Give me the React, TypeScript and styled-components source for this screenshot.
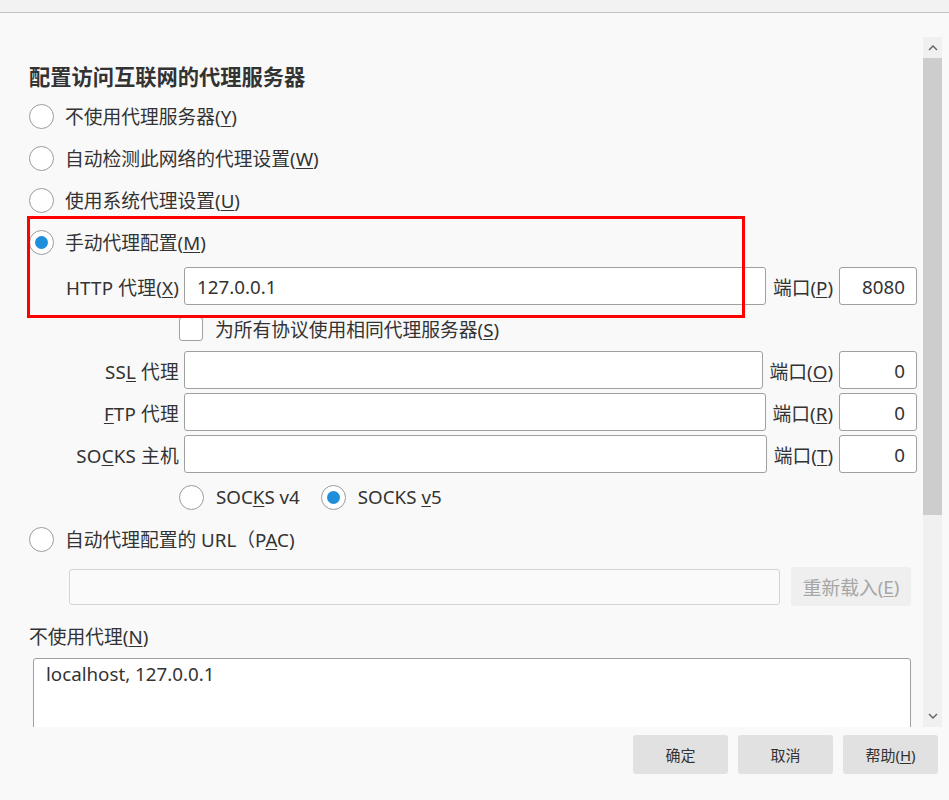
import styled, { createGlobalStyle } from 'styled-components';

const GlobalStyle = createGlobalStyle`
  html, body {
    margin: 0;
    padding: 0;
    background: #f9f9f9;
  }
  body {
    font-family: "Noto Sans", "Noto Sans CJK SC", sans-serif;
    font-size: 18.75px;
    color: #333;
  }
  * {
    box-sizing: border-box;
  }
`;

const Window = styled.div`
  width: 949px;
  height: 800px;
  display: flex;
  flex-direction: column;
  background: #f9f9f9;
  overflow: hidden;
`;

const TopBar = styled.div`
  height: 13px;
  flex-shrink: 0;
  background: #f2f2f2;
  border-bottom: 1px solid #c4c4c4;
`;

const Body = styled.div`
  display: flex;
  height: 714px;
  flex-shrink: 0;
`;

const Content = styled.div`
  flex: 1;
  position: relative;
  overflow: hidden;
  padding: 49px 6px 0 29px;
`;

const ScrollColumn = styled.div`
  width: 19px;
  margin-right: 7px;
  padding-top: 24px;
  display: flex;
  flex-direction: column;
`;

const Track = styled.div`
  flex: 1;
  display: flex;
  flex-direction: column;
  background: #f0f0f0;
`;

const Arrow = styled.div`
  height: 21px;
  display: flex;
  align-items: center;
  justify-content: center;
  color: #606060;
`;

const Thumb = styled.div`
  height: 457px;
  background: #cdcdcd;
`;

const TrackGap = styled.div`
  flex: 1;
`;

const Heading = styled.h1`
  margin: 0 0 3px;
  font-size: 21.25px;
  font-weight: 700;
  line-height: 30px;
  color: #333;
`;

const RadioRow = styled.div<{ $indent?: number; $mt?: number }>`
  display: flex;
  align-items: center;
  height: 42px;
  gap: 11px;
  margin-top: ${(p) => p.$mt ?? 0}px;
  padding-left: ${(p) => p.$indent ?? 0}px;
  white-space: nowrap;
`;

const RowText = styled.span`
  position: relative;
  top: -1px;
`;

const Radio = styled.span<{ $checked?: boolean }>`
  position: relative;
  flex-shrink: 0;
  width: 25px;
  height: 25px;
  border-radius: 50%;
  border: 1px solid #9c9c9c;
  background: #fff;

  &::after {
    content: '';
    position: absolute;
    inset: 5px;
    border-radius: 50%;
    background: ${(p) => (p.$checked ? '#1f8edb' : 'transparent')};
  }
`;

const Option = styled.span`
  display: flex;
  align-items: center;
  gap: 12px;
  margin-right: 10px;
`;

const U = styled.u`
  text-underline-offset: 2px;
  text-decoration-thickness: 1px;
`;

const FieldRow = styled.div<{ $mt: number }>`
  display: flex;
  align-items: center;
  height: 38px;
  margin-top: ${(p) => p.$mt}px;
  white-space: nowrap;
`;

const FieldLabel = styled.span`
  width: 150px;
  flex-shrink: 0;
  margin-right: 5px;
  text-align: right;
  letter-spacing: 0.2px;
`;

const TextBox = styled.div`
  flex: 1;
  height: 38px;
  display: flex;
  align-items: center;
  padding: 0 12px;
  background: #fff;
  border: 1px solid #a0a0a0;
  border-radius: 3px;
`;

const PortLabel = styled.span`
  margin: 0 6px 0 7px;
`;

const PortBox = styled(TextBox)`
  flex: none;
  width: 78px;
  justify-content: flex-end;
  padding-right: 11px;
`;

const CheckRow = styled.div`
  display: flex;
  align-items: center;
  height: 42px;
  margin-top: 3px;
  padding-left: 150px;
  gap: 12px;
`;

const Checkbox = styled.span`
  width: 24px;
  height: 24px;
  flex-shrink: 0;
  background: #fff;
  border: 1px solid #a0a0a0;
  border-radius: 3px;
`;

const PacRow = styled.div`
  display: flex;
  align-items: center;
  height: 39px;
  margin: 7px 6px 0 40px;
  gap: 11px;
`;

const PacInput = styled.div`
  flex: 1;
  height: 36px;
  background: #fafafa;
  border: 1px solid #d4d4d4;
  border-radius: 3px;
`;

const ReloadButton = styled.div`
  width: 120px;
  height: 39px;
  display: flex;
  align-items: center;
  justify-content: center;
  background: #efefef;
  border-radius: 3px;
  color: #a6a6a6;
`;

const ExceptLabel = styled.div`
  margin-top: 18px;
  line-height: 26px;
`;

const TextArea = styled.div`
  height: 100px;
  margin: 8px 6px 0 4px;
  padding: 2px 12px;
  line-height: 26px;
  background: #fff;
  border: 1px solid #a0a0a0;
  border-radius: 3px;
`;

const Highlight = styled.div`
  position: absolute;
  left: 27px;
  top: 203px;
  width: 718px;
  height: 102px;
  border: 3px solid #ff0000;
  pointer-events: none;
`;

const Footer = styled.div`
  flex: 1;
  display: flex;
  justify-content: flex-end;
  align-items: flex-start;
  gap: 10px;
  padding: 8px 11px 0 0;
`;

const FooterButton = styled.div`
  width: 95px;
  height: 39px;
  display: flex;
  align-items: center;
  justify-content: center;
  background: #e1e1e1;
  border-radius: 3px;
  font-size: 15px;
`;

const Chevron = ({ up }: { up?: boolean }) => (
  <svg width="10" height="7" viewBox="0 0 10 7">
    <path
      d={up ? 'M1 6 L5 2 L9 6' : 'M1 1 L5 5 L9 1'}
      fill="none"
      stroke="currentColor"
      strokeWidth="1.4"
    />
  </svg>
);

const fields = [
  { label: <>SS<U>L</U> 代理</>, port: 'O', value: '0', mt: 1 },
  { label: <><U>F</U>TP 代理</>, port: 'R', value: '0', mt: 4 },
  { label: <>SO<U>C</U>KS 主机</>, port: 'T', value: '0', mt: 4 },
];

function App() {
  return (
    <Window>
      <GlobalStyle />
      <TopBar />
      <Body>
        <Content>
          <Heading>配置访问互联网的代理服务器</Heading>
          <RadioRow>
            <Radio />
            <RowText>不使用代理服务器(<U>Y</U>)</RowText>
          </RadioRow>
          <RadioRow>
            <Radio />
            <RowText>自动检测此网络的代理设置(<U>W</U>)</RowText>
          </RadioRow>
          <RadioRow>
            <Radio />
            <RowText>使用系统代理设置(<U>U</U>)</RowText>
          </RadioRow>
          <RadioRow>
            <Radio $checked />
            <RowText>手动代理配置(<U>M</U>)</RowText>
          </RadioRow>

          <FieldRow $mt={4}>
            <FieldLabel>HTTP 代理(<U>X</U>)</FieldLabel>
            <TextBox>127.0.0.1</TextBox>
            <PortLabel>端口(<U>P</U>)</PortLabel>
            <PortBox>8080</PortBox>
          </FieldRow>

          <CheckRow>
            <Checkbox />
            <RowText>为所有协议使用相同代理服务器(<U>S</U>)</RowText>
          </CheckRow>

          {fields.map((f) => (
            <FieldRow $mt={f.mt} key={f.port}>
              <FieldLabel>{f.label}</FieldLabel>
              <TextBox />
              <PortLabel>端口(<U>{f.port}</U>)</PortLabel>
              <PortBox>{f.value}</PortBox>
            </FieldRow>
          ))}

          <RadioRow $indent={150} $mt={3}>
            <Option>
              <Radio />
              <RowText>SOC<U>K</U>S v4</RowText>
            </Option>
            <Option>
              <Radio $checked />
              <RowText>SOCKS <U>v</U>5</RowText>
            </Option>
          </RadioRow>

          <RadioRow>
            <Radio />
            <RowText>自动代理配置的 URL（P<U>A</U>C)</RowText>
          </RadioRow>

          <PacRow>
            <PacInput />
            <ReloadButton>重新载入(<U>E</U>)</ReloadButton>
          </PacRow>

          <ExceptLabel>不使用代理(<U>N</U>)</ExceptLabel>
          <TextArea>localhost, 127.0.0.1</TextArea>

          <Highlight />
        </Content>
        <ScrollColumn>
          <Track>
            <Arrow>
              <Chevron up />
            </Arrow>
            <Thumb />
            <TrackGap />
            <Arrow>
              <Chevron />
            </Arrow>
          </Track>
        </ScrollColumn>
      </Body>
      <Footer>
        <FooterButton>确定</FooterButton>
        <FooterButton>取消</FooterButton>
        <FooterButton>帮助(<U>H</U>)</FooterButton>
      </Footer>
    </Window>
  );
}

export default App;
